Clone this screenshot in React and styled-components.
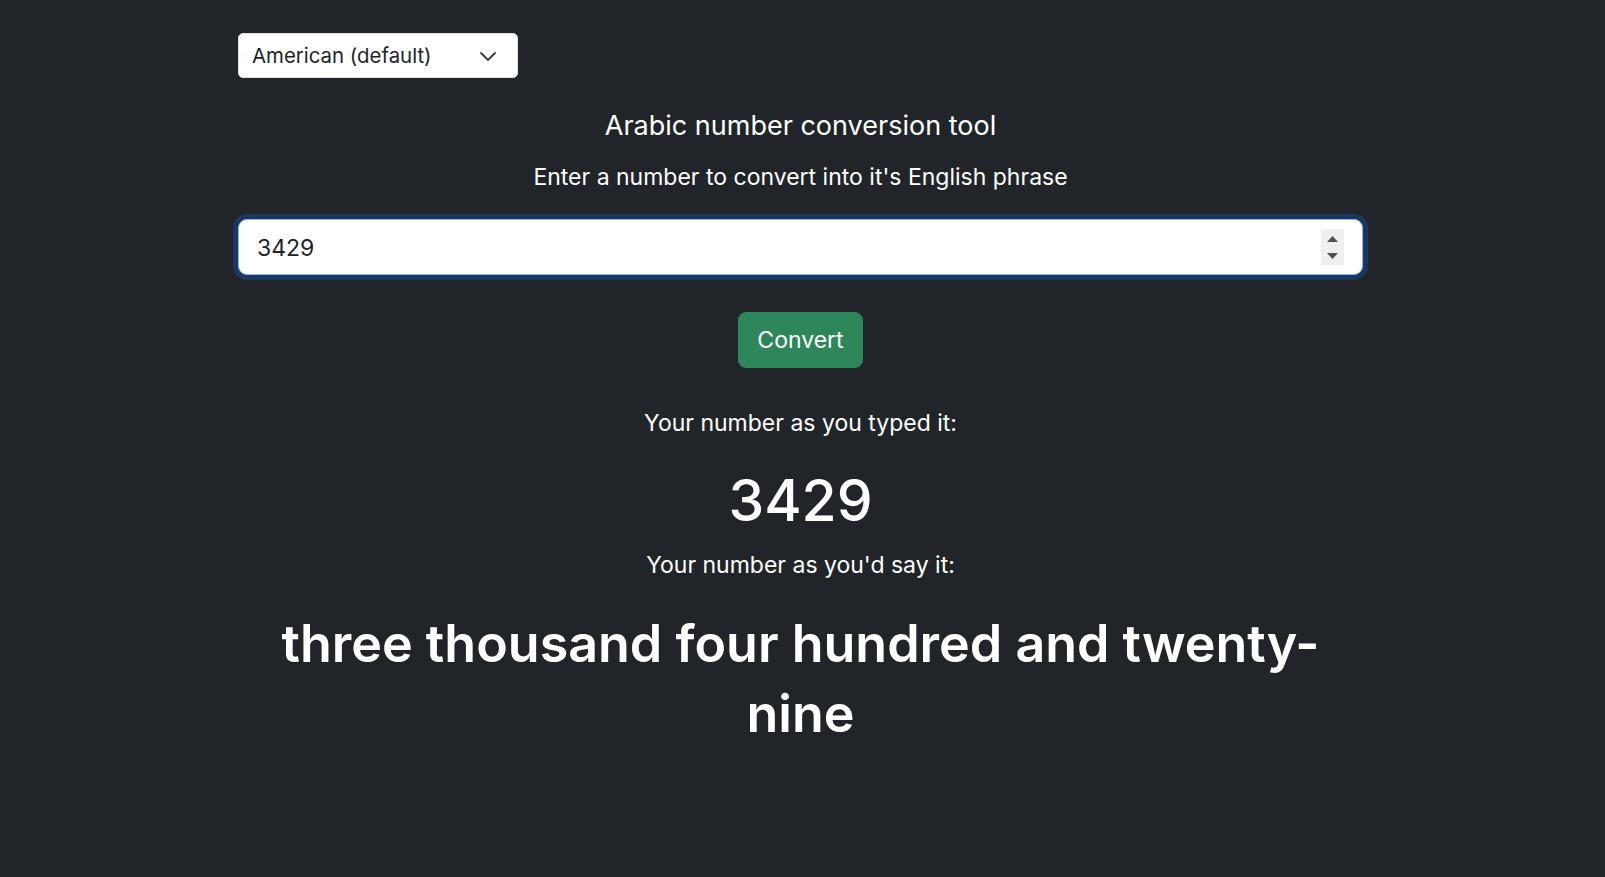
import React, { useState } from "react";
import styled, { createGlobalStyle } from "styled-components";

const Global = createGlobalStyle`
  html, body { margin: 0; padding: 0; }
  body {
    background: #212529;
    color: #ffffff;
    font-family: Inter, "Noto Sans", "Liberation Sans", sans-serif;
    font-size: 18.4px;
    line-height: 1.5;
  }
  * { box-sizing: border-box; }
`;

const Page = styled.div`
  min-height: 877px;
  padding-top: 33px;
`;

const Container = styled.main`
  width: 1125px;
  margin: 0 242px 0 238px;
  display: flex;
  flex-direction: column;
  align-items: center;
  text-align: center;
`;

const TopRow = styled.div`
  align-self: stretch;
  display: flex;
  justify-content: flex-start;
`;

const SelectWrap = styled.div`
  position: relative;
  width: 280px;
  height: 45px;
`;

const Select = styled.select`
  appearance: none;
  -webkit-appearance: none;
  width: 100%;
  height: 100%;
  background: #ffffff;
  color: #212529;
  border: 1px solid #dee2e6;
  border-radius: 5px;
  padding: 2px 40px 0 13px;
  font-family: inherit;
  font-size: 20.4px;
  line-height: 1.5;
  outline: none;
`;

const Chevron = styled.svg`
  position: absolute;
  left: 242px;
  top: 19px;
  width: 16px;
  height: 9px;
  pointer-events: none;
`;

const Title = styled.h5`
  margin: 34px 0 0;
  font-size: 27px;
  font-weight: 400;
  line-height: 27.6px;
`;

const Lead = styled.p`
  margin: 24px 0 0;
  font-size: 23px;
  line-height: 27.6px;
`;

const Field = styled.div`
  align-self: stretch;
  margin-top: 28px;
  height: 56px;
  display: flex;
  align-items: center;
  background: #ffffff;
  border: 1px solid #86b7fe;
  border-radius: 9px;
  box-shadow: 0 0 0 5px rgba(13, 110, 253, 0.25);
  padding: 0 18px 0 13px;
`;

const NumberInput = styled.input`
  flex: 1;
  min-width: 0;
  border: none;
  outline: none;
  background: transparent;
  color: #212529;
  font-family: inherit;
  font-size: 23px;
  line-height: 1.5;
  padding: 2px 0 0 5px;
  -moz-appearance: textfield;
  &::-webkit-inner-spin-button,
  &::-webkit-outer-spin-button {
    -webkit-appearance: none;
    margin: 0;
  }
`;

const Spinner = styled.div`
  width: 23px;
  height: 36px;
  background: #efefef;
  display: flex;
  flex-direction: column;
  align-items: center;
  justify-content: center;
  gap: 11px;
`;

const ConvertButton = styled.button`
  margin-top: 37px;
  height: 56px;
  padding: 0 18.4px;
  background: #2e875a;
  color: #ffffff;
  border: 1px solid #2e875a;
  border-radius: 8px;
  font-family: inherit;
  font-size: 23px;
  line-height: 1.5;
  cursor: pointer;
`;

const Caption = styled.p`
  margin: ${(p) => p.$top}px 0 0;
  font-size: 23px;
  line-height: 27.6px;
`;

const BigNumber = styled.h1`
  margin: 29px 0 0;
  font-size: 57px;
  font-weight: 500;
  line-height: 1.2;
`;

const Phrase = styled.h1`
  margin: 29px 0 0;
  font-size: 52px;
  font-weight: 600;
  line-height: 70px;
`;

export default function App() {
  const [value, setValue] = useState("3429");
  return (
    <Page>
      <Global />
      <Container>
        <TopRow>
          <SelectWrap>
            <Select defaultValue="american">
              <option value="american">American (default)</option>
              <option value="british">British</option>
            </Select>
            <Chevron viewBox="0 0 16 9" fill="none">
              <path d="M1 1l7 7 7-7" stroke="#343a40" strokeWidth="1.8" strokeLinecap="round" strokeLinejoin="round" />
            </Chevron>
          </SelectWrap>
        </TopRow>
        <Title>Arabic number conversion tool</Title>
        <Lead>Enter a number to convert into it's English phrase</Lead>
        <Field>
          <NumberInput type="number" value={value} onChange={(e) => setValue(e.target.value)} />
          <Spinner>
            <svg width="11" height="6" viewBox="0 0 11 6"><path d="M5.5 0L11 6H0z" fill="#505050" /></svg>
            <svg width="11" height="6" viewBox="0 0 11 6"><path d="M0 0h11L5.5 6z" fill="#505050" /></svg>
          </Spinner>
        </Field>
        <ConvertButton type="button">Convert</ConvertButton>
        <Caption $top={42}>Your number as you typed it:</Caption>
        <BigNumber>3429</BigNumber>
        <Caption $top={17}>Your number as you'd say it:</Caption>
        <Phrase>three thousand four hundred and twenty-nine</Phrase>
      </Container>
    </Page>
  );
}
